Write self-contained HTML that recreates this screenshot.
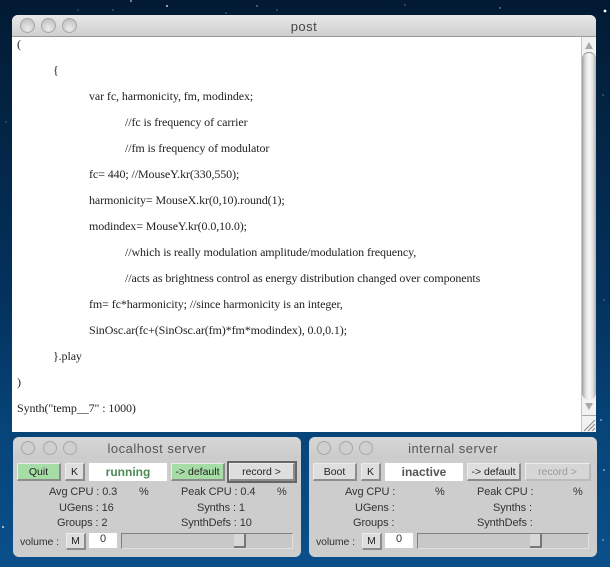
<!DOCTYPE html>
<html>
<head>
<meta charset="utf-8">
<style>
html,body{margin:0;padding:0}
body{width:610px;height:567px;overflow:hidden;position:relative;background:linear-gradient(180deg,#021a33 0,#03223f 90px,#03325f 300px,#074478 430px,#0a4f8c 567px);font-family:"Liberation Sans",sans-serif}
.a{position:absolute;white-space:nowrap}
#post{left:12px;top:15px;width:584px;height:417px;background:#fff;border-radius:6px 6px 0 0;overflow:hidden;filter:blur(.3px)}
#bar{left:0;top:0;width:584px;height:22px;background:linear-gradient(#e8e8e8,#cfcfcf);border-bottom:1px solid #999;box-sizing:border-box}
.dot{position:absolute;width:15px;height:15px;border-radius:50%;border:1px solid #a6a6a6;background:radial-gradient(circle at 50% 75%,#ececec,#cdcdcd 60%,#b8b8b8);box-sizing:border-box}
.title{position:absolute;text-align:center;font-size:13px;color:#444;letter-spacing:.5px}
.l{position:absolute;font:12px/14px "Liberation Serif",serif;color:#222;white-space:nowrap;letter-spacing:-.1px}
#sb{left:569px;top:22px;width:15px;height:395px;background:#f2f2f2;border-left:1px solid #c4c4c4;box-sizing:border-box}
#th{left:0;top:15px;width:14px;height:348px;background:linear-gradient(90deg,#a0a0a0,#dedede 25%,#f8f8f8 50%,#e4e4e4 75%,#b0b0b0);border-radius:7px;border-top:1px solid #8f8f8f;box-sizing:border-box}
.srv{position:absolute;top:437px;width:288px;height:120px;background:#cdcdcd;border-radius:6px;overflow:hidden;filter:blur(.3px)}
.srvbar{position:absolute;left:0;top:0;width:288px;height:22px;background:linear-gradient(#d6d6d6,#cbcbcb)}
.srv .dot{width:14px;height:14px;background:#cfcfcf;border-color:#a8a8a8}
.b{position:absolute;height:18px;line-height:17px;text-align:center;font-size:10.5px;color:#222;background:#dedede;border-right:2px solid #8c8c8c;border-bottom:2px solid #8c8c8c;border-top:1px solid #ececec;border-left:1px solid #ececec;box-sizing:border-box}
.g{background:#a6dca6}
.t{position:absolute;font-size:11px;line-height:14px;color:#333;white-space:nowrap;letter-spacing:-.1px}
.w{position:absolute;background:#fff;text-align:center;box-sizing:border-box}
.sl{position:absolute;left:108px;top:96px;width:172px;height:16px;background:#c8c8c8;border-top:1px solid #808080;border-left:1px solid #808080;border-right:1px solid #e0e0e0;border-bottom:1px solid #e0e0e0;box-sizing:border-box}
.kn{position:absolute;left:112px;top:0;width:12px;height:14px;background:#d8d8d8;border-right:2px solid #777;border-bottom:2px solid #777;box-sizing:border-box}
</style>
</head>
<body>
<svg class="a" style="left:0;top:0" width="610" height="567"><g fill="#fff"><circle cx="78" cy="10" r=".6" opacity=".6"/><circle cx="131" cy="1" r=".8"/><circle cx="167" cy="6" r=".9"/><circle cx="113" cy="10" r=".6" opacity=".6"/><circle cx="226" cy="13" r=".6" opacity=".6"/><circle cx="257" cy="6" r=".7" opacity=".7"/><circle cx="277" cy="10" r=".6" opacity=".6"/><circle cx="405" cy="5" r=".6" opacity=".6"/><circle cx="500" cy="8" r=".7" opacity=".7"/><circle cx="605" cy="11" r="1.4"/><circle cx="603" cy="95" r=".6" opacity=".6"/><circle cx="6" cy="122" r=".6" opacity=".5"/><circle cx="604" cy="300" r=".6" opacity=".6"/><circle cx="601" cy="420" r=".8" opacity=".8"/><circle cx="3" cy="527" r="1" opacity=".8"/><circle cx="604" cy="470" r=".8" opacity=".8"/><circle cx="603" cy="540" r=".8" opacity=".7"/></g></svg>
<div id="post" class="a">
  <div id="bar" class="a">
    <div class="dot" style="left:8px;top:3px"></div>
    <div class="dot" style="left:29px;top:3px"></div>
    <div class="dot" style="left:50px;top:3px"></div>
    <div class="title" style="left:0;width:584px;top:4px">post</div>
  </div>
  <div class="l" style="left:5px;top:22px">(</div>
  <div class="l" style="left:41px;top:48px">{</div>
  <div class="l" style="left:77px;top:74px">var fc, harmonicity, fm, modindex;</div>
  <div class="l" style="left:113px;top:100px">//fc is frequency of carrier</div>
  <div class="l" style="left:113px;top:126px">//fm is frequency of modulator</div>
  <div class="l" style="left:77px;top:152px">fc= 440; //MouseY.kr(330,550);</div>
  <div class="l" style="left:77px;top:178px">harmonicity= MouseX.kr(0,10).round(1);</div>
  <div class="l" style="left:77px;top:204px">modindex= MouseY.kr(0.0,10.0);</div>
  <div class="l" style="left:113px;top:230px">//which is really modulation amplitude/modulation frequency,</div>
  <div class="l" style="left:113px;top:256px">//acts as brightness control as energy distribution changed over components</div>
  <div class="l" style="left:77px;top:282px">fm= fc*harmonicity; //since harmonicity is an integer,</div>
  <div class="l" style="left:77px;top:308px">SinOsc.ar(fc+(SinOsc.ar(fm)*fm*modindex), 0.0,0.1);</div>
  <div class="l" style="left:41px;top:334px">}.play</div>
  <div class="l" style="left:5px;top:360px">)</div>
  <div class="l" style="left:5px;top:386px">Synth("temp__7" : 1000)</div>
  <div id="sb" class="a">
    <div class="a" style="left:3px;top:5px;width:0;height:0;border-left:4px solid transparent;border-right:4px solid transparent;border-bottom:7px solid #a8a8a8"></div>
    <div id="th" class="a"></div>
    <div class="a" style="left:3px;top:366px;width:0;height:0;border-left:4px solid transparent;border-right:4px solid transparent;border-top:7px solid #a8a8a8"></div>
    <div class="a" style="left:0;top:378px;width:14px;height:1px;background:#aaa"></div>
    <svg class="a" style="left:0;top:380px" width="14" height="15"><path d="M2 14L13 3M6 14L13 7M10 14L13 11" stroke="#888" fill="none"/></svg>
  </div>
</div>

<div class="srv" style="left:13px">
  <div class="srvbar"></div>
  <div class="dot" style="left:8px;top:4px"></div>
  <div class="dot" style="left:30px;top:4px"></div>
  <div class="dot" style="left:50px;top:4px"></div>
  <div class="title" style="left:0;width:288px;top:4px;color:#555">localhost server</div>
  <div class="b g" style="left:4px;top:26px;width:44px">Quit</div>
  <div class="b" style="left:52px;top:26px;width:20px">K</div>
  <div class="w" style="left:76px;top:26px;width:78px;height:18px;font:bold 12px/18px 'Liberation Sans',sans-serif;color:#4d8a55">running</div>
  <div class="b g" style="left:158px;top:26px;width:54px">-&gt; default</div>
  <div class="a" style="left:214px;top:24px;width:70px;height:22px;border:2px solid #666;box-sizing:border-box"></div>
  <div class="b" style="left:216px;top:26px;width:66px">record &gt;</div>
  <div class="t" style="left:36px;top:48px">Avg CPU : 0.3</div><div class="t" style="left:126px;top:48px">%</div>
  <div class="t" style="left:168px;top:48px">Peak CPU : 0.4</div><div class="t" style="left:264px;top:48px">%</div>
  <div class="t" style="left:46px;top:64px">UGens : 16</div>
  <div class="t" style="left:184px;top:64px">Synths : 1</div>
  <div class="t" style="left:44px;top:79px">Groups : 2</div>
  <div class="t" style="left:168px;top:79px">SynthDefs : 10</div>
  <div class="t" style="left:7px;top:98px;font-size:10.5px">volume :</div>
  <div class="b" style="left:53px;top:96px;width:20px;height:17px;line-height:15px">M</div>
  <div class="w" style="left:76px;top:96px;width:28px;height:15px;font-size:11px;line-height:13px;color:#333">0</div>
  <div class="sl"><div class="kn"></div></div>
</div>

<div class="srv" style="left:309px">
  <div class="srvbar"></div>
  <div class="dot" style="left:8px;top:4px"></div>
  <div class="dot" style="left:30px;top:4px"></div>
  <div class="dot" style="left:50px;top:4px"></div>
  <div class="title" style="left:0;width:288px;top:4px;color:#555">internal server</div>
  <div class="b" style="left:4px;top:26px;width:44px">Boot</div>
  <div class="b" style="left:52px;top:26px;width:20px">K</div>
  <div class="w" style="left:76px;top:26px;width:78px;height:18px;font:bold 12px/18px 'Liberation Sans',sans-serif;color:#555">inactive</div>
  <div class="b" style="left:158px;top:26px;width:54px">-&gt; default</div>
  <div class="b" style="left:216px;top:26px;width:66px;color:#999;background:#d6d6d6;border-right-color:#bbb;border-bottom-color:#bbb">record &gt;</div>
  <div class="t" style="left:36px;top:48px">Avg CPU :</div><div class="t" style="left:126px;top:48px">%</div>
  <div class="t" style="left:168px;top:48px">Peak CPU :</div><div class="t" style="left:264px;top:48px">%</div>
  <div class="t" style="left:46px;top:64px">UGens :</div>
  <div class="t" style="left:184px;top:64px">Synths :</div>
  <div class="t" style="left:44px;top:79px">Groups :</div>
  <div class="t" style="left:168px;top:79px">SynthDefs :</div>
  <div class="t" style="left:7px;top:98px;font-size:10.5px">volume :</div>
  <div class="b" style="left:53px;top:96px;width:20px;height:17px;line-height:15px">M</div>
  <div class="w" style="left:76px;top:96px;width:28px;height:15px;font-size:11px;line-height:13px;color:#333">0</div>
  <div class="sl"><div class="kn"></div></div>
</div>
</body>
</html>
